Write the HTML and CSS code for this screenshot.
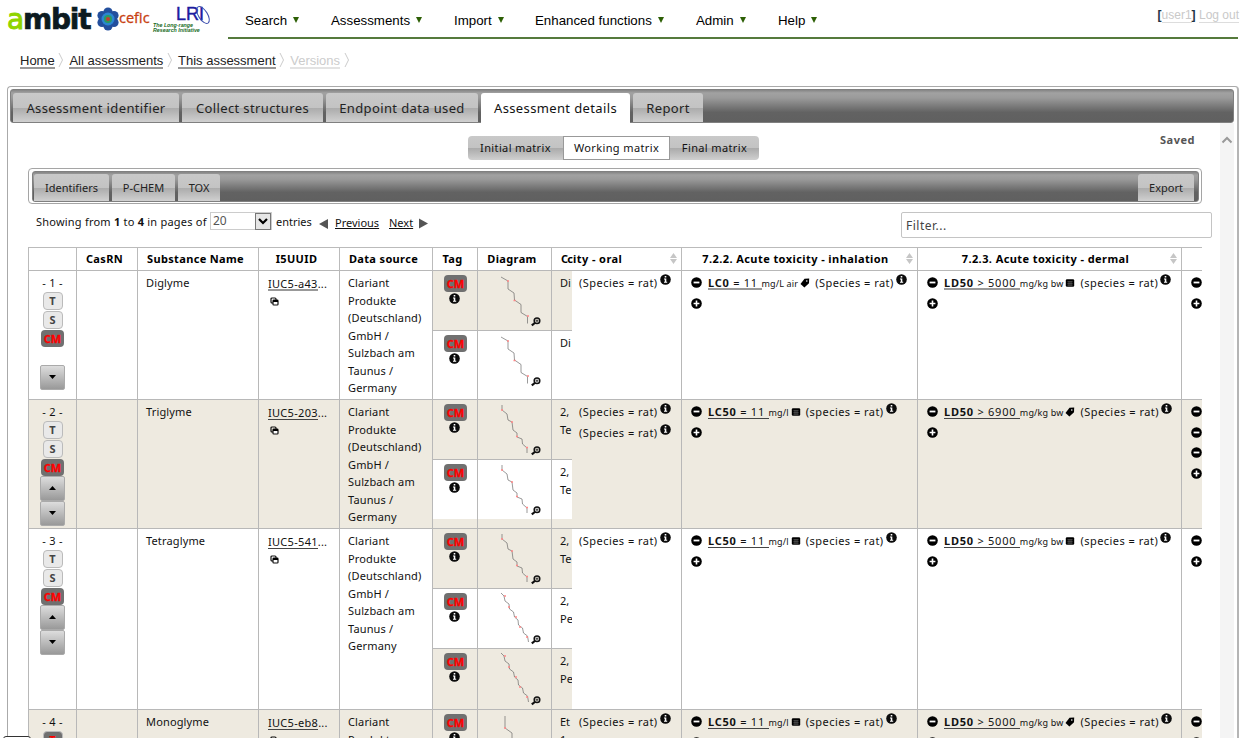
FILE: index.html
```html
<!DOCTYPE html>
<html lang="en">
<head>
<meta charset="utf-8">
<title>Assessment details</title>
<link rel="stylesheet" href="styles.css">
</head>
<body>
<svg class="defs" width="0" height="0">
  <symbol id="info" viewBox="0 0 11 11"><circle cx="5.5" cy="5.5" r="5.3" fill="#0b0b0b"/><path d="M4 4.4h2.3v3.4H7.2v1H4v-1h.8V5.4H4zM4.7 1.9h1.6v1.5H4.7z" fill="#fff"/></symbol>
  <symbol id="minus" viewBox="0 0 11 11"><circle cx="5.5" cy="5.5" r="5.3"/><path d="M2.6 4.6h5.8v1.8H2.6z" fill="#fff"/></symbol>
  <symbol id="plus" viewBox="0 0 11 11"><circle cx="5.5" cy="5.5" r="5.3"/><path d="M4.7 2.6h1.6v2.1h2.1v1.6H6.3v2.1H4.7V6.3H2.6V4.7h2.1z" fill="#fff"/></symbol>
  <symbol id="tag" viewBox="0 0 10 10"><path d="M4.500.8 9.200.6 9 5.200 4.400 9.600.5 6z"/><circle cx="6.8" cy="3" r=".8" fill="#fff"/></symbol>
  <symbol id="grid" viewBox="0 0 10 10"><rect x=".8" y="1.2" width="8.4" height="7.6" rx="1.2"/><path d="M2.3 3.7h5.4M2.3 5.4h5.4M2.3 7.1h5.4M4 3v5M6 3v5" stroke="#777" stroke-width=".5"/></symbol>
  <symbol id="copy" viewBox="0 0 9 9"><rect x="1" y="1" width="5" height="5" rx="1" fill="none" stroke="#111" stroke-width="1.2"/><rect x="3" y="3.2" width="5" height="4.8" rx=".8" fill="#fff" stroke="#111" stroke-width="1.2"/><path d="M3 3h5v2H3z"/></symbol>
  <symbol id="lens" viewBox="0 0 10 10"><circle cx="6" cy="3.8" r="2.8" fill="none" stroke="#111" stroke-width="1.5"/><path d="M4.5 3.8h3M6 2.4v2.8" stroke="#111" stroke-width=".8"/><path d="M.8 8.4 3.8 6" stroke="#111" stroke-width="2.2"/></symbol>
  <symbol id="mol-a" viewBox="0 0 50 58"><path d="M10 6l7 4v8l6 4 .5 7 6.500 4.500v8l6.500 4v7"/><path class="o" d="M16 10h2M22.500 29.500h2M36 45h2"/></symbol>
  <symbol id="mol-b" viewBox="0 0 50 58"><path d="M11 5v5l5 4 1 6 4 2 1 8 4 3v4l5 2 .5 5 4.500 4v5"/><path class="o" d="M10 10h2M20 22h2M25 36.500h2M35 47.500h2"/></symbol>
  <symbol id="mol-c" viewBox="0 0 50 58"><path d="M10 4l3 3 1 5 4 3 .5 5 4 3 1 5 3.500 3 .5 5 4 3 1 5 4 3 1 6"/><path class="o" d="M13 7h2M17 18h2M24 28h2M28 38h2M35 48h2"/></symbol>
  <symbol id="mol-d" viewBox="0 0 50 58"><path d="M14 6v12l7 5v10l8 5v10"/><path class="o" d="M13 18h2M28 38h2"/></symbol>
</svg>

<header class="top">
  <div class="logos">
    <span class="ambit"><i>a</i>mbit</span>
    <svg class="flower" viewBox="0 0 22 24"><g fill="#234f9d"><circle cx="11" cy="5" r="4.600"/><circle cx="17" cy="8.500" r="4.600"/><circle cx="17" cy="15.500" r="4.600"/><circle cx="11" cy="19" r="4.600"/><circle cx="5" cy="15.500" r="4.600"/><circle cx="5" cy="8.500" r="4.600"/></g><circle cx="11" cy="12" r="6.500" fill="#2b86d1"/><circle cx="11" cy="12" r="4" fill="#2b9a62"/><circle cx="11" cy="12" r="2" fill="#c33d33"/></svg>
    <span class="cefic">cefic</span>
    <span class="lri"><b>LRI</b><small>The Long-range<br>Research Initiative</small><svg viewBox="0 0 16 22"><ellipse cx="8" cy="10" rx="4.500" ry="9.500" transform="rotate(-32 8 10)"/></svg></span>
  </div>
  <nav class="menu">
    <a class="m1">Search</a><a class="m2">Assessments</a><a class="m3">Import</a><a class="m4">Enhanced functions</a><a class="m5">Admin</a><a class="m6">Help</a>
    <span class="user"><b>[</b><u>user1</u><b>]</b> <u>Log out</u></span>
  </nav>
</header>

<div class="crumbs">
  <a>Home</a><svg viewBox="0 0 6 16"><path d="M1 1l3.500 7L1 15"/></svg><a>All assessments</a><svg viewBox="0 0 6 16"><path d="M1 1l3.500 7L1 15"/></svg><a>This assessment</a><svg viewBox="0 0 6 16"><path d="M1 1l3.500 7L1 15"/></svg><a class="off">Versions</a><svg viewBox="0 0 6 16"><path d="M1 1l3.500 7L1 15"/></svg>
</div>

<main class="panel">
  <div class="bar tabs">
    <a class="t1">Assessment identifier</a><a class="t2">Collect structures</a><a class="t3">Endpoint data used</a><a class="t4 on">Assessment details</a><a class="t5">Report</a>
  </div>
  <div class="body">
    <div class="content">
      <div class="switch"><a class="s1">Initial matrix</a><a class="s2 on">Working matrix</a><a class="s3">Final matrix</a><b class="saved">Saved</b></div>
      <div class="frame"><div class="bar sub"><a class="b1">Identifiers</a><a class="b2">P-CHEM</a><a class="b3">TOX</a><a class="b4">Export</a></div></div>
      <div class="paging">
        <span class="show">Showing from <b>1</b> to <b>4</b> in pages of</span>
        <span class="select">20<i><svg viewBox="0 0 10 7"><path d="M1 1l4 4 4-4" fill="none" stroke="#000" stroke-width="2.200"/></svg></i></span>
        <span class="entries">entries</span>
        <svg class="pv" viewBox="0 0 9 11"><path d="M0 6l9-5v10z"/></svg><a class="prev">Previous</a><a class="next">Next</a><svg class="nx" viewBox="0 0 9 11"><path d="M9 5.500L0 .5v10z"/></svg>
        <span class="filter">Filter...</span>
      </div>
      <div class="tables">
        <div class="left">
          <div class="h"></div><div class="h">CasRN</div><div class="h">Substance Name</div><div class="h">I5UUID</div><div class="h">Data source</div><div class="h">Tag</div><div class="h">Diagram</div><div class="h cut">Cc</div>

          <div class="c ctl">- 1 -<i class="k">T</i><i class="k">S</i><i class="cm">CM</i><i class="mv gap"><svg viewBox="0 0 7 4"><path d="M0 0h7L3.500 4z"/></svg></i></div>
          <div class="c"></div><div class="c">Diglyme</div>
          <div class="c id soft"><u>IUC5-a43</u>...<svg><use href="#copy"/></svg></div>
          <div class="c">Clariant<br>Produkte<br>(Deutschland)<br>GmbH /<br>Sulzbach am<br>Taunus /<br>Germany</div>
          <div class="subs">
            <div class="s tagc"><i class="cm">CM</i><svg><use href="#info"/></svg></div><div class="s dg"><svg class="mol"><use href="#mol-a"/></svg><svg class="lens"><use href="#lens"/></svg></div><div class="s nm">Di</div>
            <div class="s w tagc"><i class="cm">CM</i><svg><use href="#info"/></svg></div><div class="s w dg"><svg class="mol"><use href="#mol-a"/></svg><svg class="lens"><use href="#lens"/></svg></div><div class="s w nm">Di</div>
            <div class="s w f"></div><div class="s w f"></div><div class="s w f"></div>
          </div>

          <div class="c e ctl">- 2 -<i class="k">T</i><i class="k">S</i><i class="cm">CM</i><i class="mv"><svg viewBox="0 0 7 4"><path d="M0 4h7L3.500 0z"/></svg></i><i class="mv"><svg viewBox="0 0 7 4"><path d="M0 0h7L3.500 4z"/></svg></i></div>
          <div class="c e"></div><div class="c e">Triglyme</div>
          <div class="c e id"><u>IUC5-203</u>...<svg><use href="#copy"/></svg></div>
          <div class="c e">Clariant<br>Produkte<br>(Deutschland)<br>GmbH /<br>Sulzbach am<br>Taunus /<br>Germany</div>
          <div class="subs">
            <div class="s tagc"><i class="cm">CM</i><svg><use href="#info"/></svg></div><div class="s dg"><svg class="mol"><use href="#mol-b"/></svg><svg class="lens"><use href="#lens"/></svg></div><div class="s nm">2,<br>Te</div>
            <div class="s w tagc"><i class="cm">CM</i><svg><use href="#info"/></svg></div><div class="s w dg"><svg class="mol"><use href="#mol-b"/></svg><svg class="lens"><use href="#lens"/></svg></div><div class="s w nm">2,<br>Te</div>
            <div class="s f"></div><div class="s f"></div><div class="s f"></div>
          </div>

          <div class="c ctl">- 3 -<i class="k">T</i><i class="k">S</i><i class="cm">CM</i><i class="mv"><svg viewBox="0 0 7 4"><path d="M0 4h7L3.500 0z"/></svg></i><i class="mv"><svg viewBox="0 0 7 4"><path d="M0 0h7L3.500 4z"/></svg></i></div>
          <div class="c"></div><div class="c">Tetraglyme</div>
          <div class="c id"><u>IUC5-541</u>...<svg><use href="#copy"/></svg></div>
          <div class="c">Clariant<br>Produkte<br>(Deutschland)<br>GmbH /<br>Sulzbach am<br>Taunus /<br>Germany</div>
          <div class="subs">
            <div class="s tagc"><i class="cm">CM</i><svg><use href="#info"/></svg></div><div class="s dg"><svg class="mol"><use href="#mol-b"/></svg><svg class="lens"><use href="#lens"/></svg></div><div class="s nm">2,<br>Te</div>
            <div class="s w tagc"><i class="cm">CM</i><svg><use href="#info"/></svg></div><div class="s w dg"><svg class="mol"><use href="#mol-c"/></svg><svg class="lens"><use href="#lens"/></svg></div><div class="s w nm">2,<br>Pe</div>
            <div class="s tagc"><i class="cm">CM</i><svg><use href="#info"/></svg></div><div class="s dg"><svg class="mol"><use href="#mol-c"/></svg><svg class="lens"><use href="#lens"/></svg></div><div class="s nm">2,<br>Pe</div>
          </div>

          <div class="c e ctl">- 4 -<i class="k red">T</i></div>
          <div class="c e"></div><div class="c e">Monoglyme</div>
          <div class="c e id"><u>IUC5-eb8</u>...<svg><use href="#copy"/></svg></div>
          <div class="c e">Clariant<br>Produkte</div>
          <div class="subs">
            <div class="s tagc"><i class="cm">CM</i><svg><use href="#info"/></svg></div><div class="s dg"><svg class="mol"><use href="#mol-d"/></svg></div><div class="s nm">Et<br>1,</div>
          </div>
        </div>

        <div class="right">
          <div class="h first">ity - oral<em></em></div><div class="h">7.2.2. Acute toxicity - inhalation<em></em></div><div class="h">7.2.3. Acute toxicity - dermal<em></em></div><div class="h"></div>

          <div class="d first"><p>(Species = rat)<svg class="n"><use href="#info"/></svg></p></div>
          <div class="d soft"><p><svg class="r"><use href="#minus"/></svg><u><b>LC0</b> = 11 </u><small>mg/L air</small><svg class="y"><use href="#tag"/></svg>(Species = rat)<svg class="n"><use href="#info"/></svg></p><p><svg class="r"><use href="#plus"/></svg></p></div>
          <div class="d soft"><p><svg class="r"><use href="#minus"/></svg><u><b>LD50</b> &gt; 5000 </u><small>mg/kg bw</small><svg class="y"><use href="#grid"/></svg>(species = rat)<svg class="n"><use href="#info"/></svg></p><p><svg class="r"><use href="#plus"/></svg></p></div>
          <div class="d"><p><svg class="r"><use href="#minus"/></svg></p><p><svg class="r"><use href="#plus"/></svg></p></div>

          <div class="d e first"><p>(Species = rat)<svg class="n"><use href="#info"/></svg></p><p>(Species = rat)<svg class="n"><use href="#info"/></svg></p></div>
          <div class="d e"><p><svg class="r"><use href="#minus"/></svg><u><b>LC50</b> = 11 </u><small>mg/l</small><svg class="y"><use href="#grid"/></svg>(species = rat)<svg class="n"><use href="#info"/></svg></p><p><svg class="r"><use href="#plus"/></svg></p></div>
          <div class="d e"><p><svg class="r"><use href="#minus"/></svg><u><b>LD50</b> &gt; 6900 </u><small>mg/kg bw</small><svg class="y"><use href="#tag"/></svg>(Species = rat)<svg class="n"><use href="#info"/></svg></p><p><svg class="r"><use href="#plus"/></svg></p></div>
          <div class="d e"><p><svg class="r"><use href="#minus"/></svg></p><p><svg class="r"><use href="#minus"/></svg></p><p><svg class="r"><use href="#minus"/></svg></p><p><svg class="r"><use href="#plus"/></svg></p></div>

          <div class="d first"><p>(Species = rat)<svg class="n"><use href="#info"/></svg></p></div>
          <div class="d"><p><svg class="r"><use href="#minus"/></svg><u><b>LC50</b> = 11 </u><small>mg/l</small><svg class="y"><use href="#grid"/></svg>(species = rat)<svg class="n"><use href="#info"/></svg></p><p><svg class="r"><use href="#plus"/></svg></p></div>
          <div class="d"><p><svg class="r"><use href="#minus"/></svg><u><b>LD50</b> &gt; 5000 </u><small>mg/kg bw</small><svg class="y"><use href="#grid"/></svg>(species = rat)<svg class="n"><use href="#info"/></svg></p><p><svg class="r"><use href="#plus"/></svg></p></div>
          <div class="d"><p><svg class="r"><use href="#minus"/></svg></p><p><svg class="r"><use href="#plus"/></svg></p></div>

          <div class="d e first"><p>(Species = rat)<svg class="n"><use href="#info"/></svg></p></div>
          <div class="d e"><p><svg class="r"><use href="#minus"/></svg><u><b>LC50</b> = 11 </u><small>mg/l</small><svg class="y"><use href="#grid"/></svg>(species = rat)<svg class="n"><use href="#info"/></svg></p><p><svg class="r"><use href="#plus"/></svg></p></div>
          <div class="d e"><p><svg class="r"><use href="#minus"/></svg><u><b>LD50</b> &gt; 5000 </u><small>mg/kg bw</small><svg class="y"><use href="#tag"/></svg>(Species = rat)<svg class="n"><use href="#info"/></svg></p><p><svg class="r"><use href="#plus"/></svg></p></div>
          <div class="d e"><p><svg class="r"><use href="#minus"/></svg></p><p><svg class="r"><use href="#plus"/></svg></p></div>
        </div>
      </div>
    </div>
    <div class="scroll"><svg viewBox="0 0 12 8"><path d="M1.500 6.500L6 2l4.500 4.500"/></svg></div>
  </div>
</main>
<div class="status"></div>
</body>
</html>
```

FILE: styles.css
```css
* { box-sizing: border-box; }
html, body { height: 738px; overflow: hidden; }
body { margin: 0; background: #fff; color: #111; font: 11px/17.5px "Noto Sans", sans-serif; white-space: nowrap; }
i { font-style: normal; }
p { margin: 0; }
svg { flex: none; }
.defs { position: absolute; }

.top { display: flex; height: 39px; font-family: "Liberation Sans", Arial, sans-serif; }
.logos { display: flex; width: 228px; padding: 4px 0 0 7px; }
.ambit { width: 90px; font: bold 28px/31px "DejaVu Sans", sans-serif; letter-spacing: -1.2px; color: #0c1a20; -webkit-text-stroke: .7px #0c1a20; }
.ambit i { color: #8fd400; font-weight: normal; -webkit-text-stroke: 1px #8fd400; }
.flower { width: 22px; height: 24px; margin-top: 3px; }
.cefic { width: 34px; font: 14.5px/27px "Open Sans", sans-serif; color: #c8400f; -webkit-text-stroke: .3px #c8400f; }
.lri { position: relative; width: 60px; }
.lri b { display: block; padding-left: 23px; font: 18px/20px "Liberation Sans", sans-serif; color: #1c1ca0; -webkit-text-stroke: .4px #1c1ca0; }
.lri small { display: block; font: italic bold 5.3px/5px "Liberation Sans", sans-serif; color: #186a24; margin-top: -1px; }
.lri svg { position: absolute; left: 42px; top: 1px; width: 16px; height: 22px; fill: none; stroke: #3e4fae; }
.menu { display: flex; width: 1010px; height: 39px; border-bottom: 2px solid #557a3c; padding: 12px 0 0 17px; font-size: 13.3px; line-height: 17px; color: #000; }
.menu a::after { content: ""; display: inline-block; margin: 0 0 2px 6px; border: 3.500px solid transparent; border-top: 6px solid #2d5f05; border-bottom: 0; }
.m1 { width: 86px; } .m2 { width: 123px; } .m3 { width: 81px; } .m4 { width: 161px; } .m5 { width: 82px; } .m6 { width: 50px; }
.user { margin: -5px -1px 0 auto; font-size: 12px; color: #234; }
.user u { color: #c9c9c9; text-decoration: none; border-bottom: 1px solid #ddd; }

.crumbs { display: flex; height: 47px; padding: 12px 0 0 20px; font: 13px/19px "Liberation Sans", sans-serif; color: #222; }
.crumbs a { height: 18px; border-bottom: 2px solid #999; }
.crumbs svg { width: 6px; height: 16px; margin: 1px 5px 0 3.700px; fill: none; stroke: #ccc; }
.crumbs .off { color: #ccc; border-color: #e3e3e3; }

.panel { width: 1232px; height: 670px; margin-left: 7px; border: 1px solid #aaa; border-right: 2px solid #b5b5b5; border-radius: 4px; padding: 2px 3px 0 2px; }
.bar { display: flex; background: linear-gradient(#858585 0, #a2a2a2 3px, #9a9a9a 25%, #626262 70%, #606060); border: 1px solid #808080; border-radius: 3px; }
.bar a { border-radius: 3px 3px 0 0; background: linear-gradient(#c9c9c9 0, #c3c3c3 50%, #ababab 52%, #d0d0d0); text-align: center; color: #222; }
.tabs { height: 34px; padding: 3px 0 0 2px; font-size: 13px; line-height: 31px; letter-spacing: .37px; }
.tabs a { height: 29px; margin-right: 3px; }
.t1 { width: 166px; } .t2 { width: 141px; } .t3 { width: 152px; } .t4 { width: 149px; } .t5 { width: 70px; }
.tabs a.on { background: #fff; height: 30px; color: #111; }
.body { display: flex; height: 635px; }
.content { width: 1210px; }
.scroll { width: 14px; background: #f4f4f4; padding: 13px 0 0 1px; }
.scroll svg { display: block; width: 12px; height: 8px; fill: none; stroke: #999; stroke-width: 2; }

.switch { display: flex; height: 45px; padding: 13px 0 0 458px; letter-spacing: .37px; }
.switch a { height: 24px; line-height: 24px; text-align: center; background: linear-gradient(#c9c9c9 0, #c3c3c3 50%, #ababab 52%, #d0d0d0); }
.s1 { width: 95px; border-radius: 4px 0 0 4px; } .s2 { width: 107px; } .s3 { width: 89px; border-radius: 0 4px 4px 0; }
.switch .on { background: #fff; border: 1px solid #999; line-height: 22px; }
.saved { margin: -5px 0 0 401px; color: #555; letter-spacing: .5px; }
.frame { margin-left: 18px; width: 1174px; height: 36px; padding: 2px 2px 2px 3px; border: 1px solid #a5a5a5; border-radius: 4px; }
.sub { height: 31px; padding: 2px 3px 0 1px; line-height: 28px; }
.sub a { height: 27px; margin-right: 3px; }
.b1 { width: 75px; } .b2 { width: 63px; } .b3 { width: 42px; } .b4 { width: 56px; margin-left: auto; }
.sub a.b4 { margin-right: 1px; }

.paging { display: flex; height: 43px; padding: 8px 0 0 26px; line-height: 19px; }
.show { width: 174px; letter-spacing: .22px; }
.select { display: flex; width: 62px; height: 18px; border: 1px solid #ccc; padding-left: 2px; line-height: 16px; font-size: 12px; color: #555; }
.select i { margin-left: auto; width: 16px; height: 17px; border: 1px solid #777; background: #e6e6e6; display: flex; align-items: center; justify-content: center; }
.select svg { width: 10px; height: 7px; }
.entries { width: 47px; padding-left: 4px; }
.pv, .nx { width: 9px; height: 11px; margin-top: 6px; fill: #555; }
.prev, .next { height: 17px; margin: 1px 0 0 7px; text-decoration: underline; }
.prev { width: 44px; } .next { margin-left: 10px; width: 25px; } .nx { margin-left: 5px; margin-top: 6px; }
.filter { width: 311px; height: 26px; margin-left: auto; margin-right: 8px; border: 1px solid #c4c4c4; border-radius: 2px; padding-left: 4px; font-size: 12px; line-height: 26px; color: #444; letter-spacing: .5px; }

.tables { display: flex; width: 1174px; height: 500px; margin-left: 18px; overflow: hidden; }
.left, .right { display: grid; grid-template-rows: 23px 129px 129px 181px 60px; }
.left { grid-template-columns: 48px 61px 121px 81px 93px 45px 74px 21px; width: 544px; }
.right { grid-template-columns: 109px 236px 264px 21px; width: 630px; }
.h { position: relative; border: 1px solid #bbb; border-width: 1px 0 0 1px; padding-right: 5px; text-align: center; font-weight: bold; line-height: 22px; letter-spacing: .35px; color: #000; }
.right .h { letter-spacing: .42px; padding-right: 8px; }
.h em { position: absolute; right: 4px; top: 5px; width: 7px; height: 11px; background: linear-gradient(#c6c6c6, #c6c6c6); clip-path: polygon(50% 0, 100% 45%, 0 45%, 0 55%, 100% 55%, 50% 100%, 0 55%, 0 45%); }
.left .cut { text-align: left; padding: 0 0 0 9px; letter-spacing: -.8px; }
.c, .d, .s { border: 1px solid #b8b8b8; border-width: 1px 0 0 1px; }
.c { padding: 3px 0 0 8px; letter-spacing: .15px; }
.e { background: #eeeae0; }
.id { padding: 4px 0 0 9px; }
.id u, .d u { text-decoration: none; border-bottom: 1px solid #444; }
.id u { display: inline-block; height: 16px; line-height: 17px; vertical-align: top; letter-spacing: .3px; }
.soft u { border-bottom: 2px solid #999; }
.id svg { display: block; width: 9px; height: 9px; margin: 4px 0 0 2px; }
.ctl { display: flex; flex-direction: column; align-items: center; padding: 3px 0 0; letter-spacing: .3px; }
.k, .cm { display: block; text-align: center; font: bold 11px/16px "Noto Sans", sans-serif; letter-spacing: 0; }
.k { width: 20px; height: 18px; margin-bottom: 1px; border: 1px solid #bbb; border-radius: 4px; background: #e9e9e9; color: #444; }
.cm { width: 23px; height: 17px; border-radius: 4px; background: #707070; color: #f00; line-height: 18px; -webkit-text-stroke: .3px #f00; }
.k.red { background: #707070; color: #f00; }
.mv { width: 25px; height: 25px; border: 1px solid #aaa; border-radius: 2px; background: linear-gradient(#ddd, #999); display: flex; align-items: center; justify-content: center; }
.mv.gap { margin-top: 18px; }
.mv svg { width: 7px; height: 4px; }
.subs { grid-column: span 3; display: grid; grid-template-columns: 45px 74px 21px; grid-template-rows: 60px 60px 1fr; overflow: hidden; }
.s { background: #eeeae0; }
.w { background: #fff; }
.f { border-top: 0; }
.tagc { padding: 4px 0 0 11px; }
.tagc svg { display: block; width: 11px; height: 11px; margin: 1px 0 0 5px; }
.dg { position: relative; }
.mol { width: 50px; height: 58px; margin-left: 13px; display: block; fill: none; stroke: #555; stroke-width: .6; }
.o { stroke: #f88; stroke-width: 1.600; }
.lens { position: absolute; right: 10px; bottom: 3px; width: 10px; height: 10px; }
.nm { padding: 3px 0 0 8px; }
.right .first { border-left: 0; }
.right .h.first { text-align: left; padding-left: 1px; }
.d { padding: 1px 0 0 8px; overflow: hidden; }
.d.first { padding-left: 7px; }
.d p { display: flex; height: 20.5px; line-height: 21px; letter-spacing: .46px; }
.d u { height: 18px; white-space: pre; letter-spacing: .75px; }
.d small { font-size: 9px; line-height: 24px; letter-spacing: .15px; }
.r { width: 11px; height: 11px; margin: 5px 6px 0 1px; }
.y { width: 10px; height: 10px; margin: 6px 5px 0 2px; }
.n { width: 11px; height: 11px; margin: 2px 0 0 2px; }
.status { position: absolute; left: 3px; top: 736px; width: 28px; height: 10px; border: 1px solid #333; border-radius: 3px; background: #fff; }
```
